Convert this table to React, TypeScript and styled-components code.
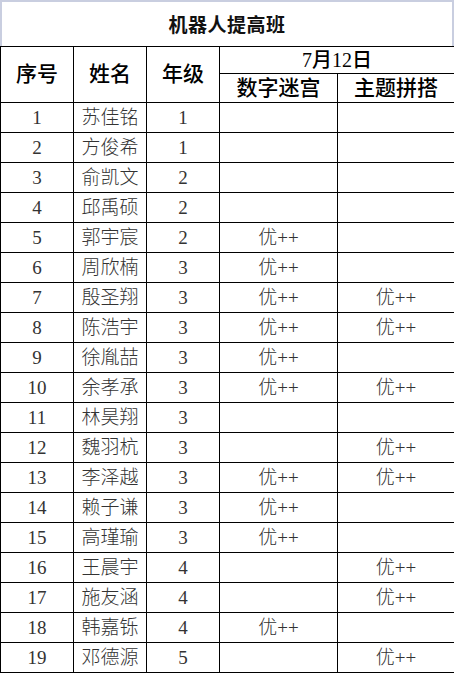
import React from "react";
import styled, { createGlobalStyle } from "styled-components";

const Global = createGlobalStyle`
  html, body { margin: 0; padding: 0; background: #ffffff; }
  body { font-family: "Liberation Serif", "Noto Sans CJK SC", serif; }
`;

const Sheet = styled.div`
  width: 454px;
  background: #fff;
`;

const TitleBar = styled.div`
  box-sizing: border-box;
  height: 46px;
  border-top: 2px solid #c9cee0;
  border-left: 2px solid #c9cee0;
  border-right: 2px solid #c9cee0;
  display: flex;
  align-items: center;
  justify-content: center;
  font-family: "Liberation Serif", "Noto Sans CJK SC", serif;
  font-weight: 700;
  font-size: 19px;
  color: #111;
  letter-spacing: 0.5px;
  padding-bottom: 2px;
`;

const Table = styled.table`
  width: 454px;
  border-collapse: collapse;
  table-layout: fixed;
  font-family: "Liberation Serif", "Noto Sans CJK SC", serif;
`;

const HeadCell = styled.th<{ $h: number; $size?: number }>`
  border: 1px solid #000;
  height: ${(p) => p.$h}px;
  padding: 0;
  font-weight: 500;
  font-size: ${(p) => p.$size ?? 21}px;
  line-height: 1;
  color: #000;
  text-align: center;
  vertical-align: middle;
`;

const Cell = styled.td`
  border: 1px solid #000;
  height: 29px;
  padding: 0;
  font-size: 19px;
  font-weight: 300;
  line-height: 1;
  color: #333;
  text-align: center;
  vertical-align: middle;
`;

type Row = [number, string, number, boolean, boolean];

const rows: Row[] = [
  [1, "苏佳铭", 1, false, false],
  [2, "方俊希", 1, false, false],
  [3, "俞凯文", 2, false, false],
  [4, "邱禹硕", 2, false, false],
  [5, "郭宇宸", 2, true, false],
  [6, "周欣楠", 3, true, false],
  [7, "殷圣翔", 3, true, true],
  [8, "陈浩宇", 3, true, true],
  [9, "徐胤喆", 3, true, false],
  [10, "余孝承", 3, true, true],
  [11, "林昊翔", 3, false, false],
  [12, "魏羽杭", 3, false, true],
  [13, "李泽越", 3, true, true],
  [14, "赖子谦", 3, true, false],
  [15, "高瑾瑜", 3, true, false],
  [16, "王晨宇", 4, false, true],
  [17, "施友涵", 4, false, true],
  [18, "韩嘉铄", 4, true, false],
  [19, "邓德源", 5, false, true],
];

export default function App() {
  return (
    <Sheet>
      <Global />
      <TitleBar>机器人提高班</TitleBar>
      <Table>
        <colgroup>
          <col style={{ width: 73 }} />
          <col style={{ width: 73 }} />
          <col style={{ width: 73 }} />
          <col style={{ width: 118 }} />
          <col style={{ width: 117 }} />
        </colgroup>
        <thead>
          <tr>
            <HeadCell $h={26} rowSpan={2}>序号</HeadCell>
            <HeadCell $h={26} rowSpan={2}>姓名</HeadCell>
            <HeadCell $h={26} rowSpan={2}>年级</HeadCell>
            <HeadCell $h={26} colSpan={2} $size={20}>7月12日</HeadCell>
          </tr>
          <tr>
            <HeadCell $h={28}>数字迷宫</HeadCell>
            <HeadCell $h={28}>主题拼搭</HeadCell>
          </tr>
        </thead>
        <tbody>
          {rows.map(([n, name, g, a, b]) => (
            <tr key={n}>
              <Cell>{n}</Cell>
              <Cell>{name}</Cell>
              <Cell>{g}</Cell>
              <Cell>{a ? "优++" : ""}</Cell>
              <Cell>{b ? "优++" : ""}</Cell>
            </tr>
          ))}
        </tbody>
      </Table>
    </Sheet>
  );
}
